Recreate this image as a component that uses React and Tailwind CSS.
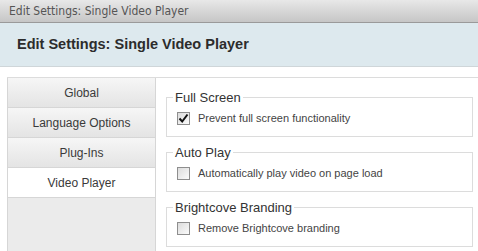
import React from 'react';

const tabs = ['Global', 'Language Options', 'Plug-Ins', 'Video Player'];

const groups = [
  { legend: 'Full Screen', label: 'Prevent full screen functionality', checked: true },
  { legend: 'Auto Play', label: 'Automatically play video on page load', checked: false },
  { legend: 'Brightcove Branding', label: 'Remove Brightcove branding', checked: false },
];

function Check({ checked }) {
  return (
    <span className="w-[13px] h-[13px] border border-[#8e8e8e] bg-gradient-to-br from-[#dcdcdc] to-[#fbfbfb] flex items-center justify-center shrink-0">
      {checked && (
        <svg width="11" height="11" viewBox="0 0 11 11">
          <path d="M1.5 5.5 L4.2 8.5 L9.5 1.5" fill="none" stroke="#111" strokeWidth="2" />
        </svg>
      )}
    </span>
  );
}

export default function App() {
  return (
    <div className="w-[478px] h-[251px] overflow-hidden bg-white" style={{ fontFamily: 'Arial, "Liberation Sans", sans-serif' }}>
      {/* window title */}
      <div className="h-[23px] bg-gradient-to-b from-[#e8e8e8] to-[#c6c6c6] border-b border-[#9a9a9a] flex items-center pl-[9px] text-[12px] text-[#555]" style={{ fontFamily: '"DejaVu Sans Condensed", Tahoma, sans-serif' }}>
        Edit Settings: Single Video Player
      </div>

      {/* header band */}
      <div className="h-[44px] bg-[#dde9ee] border-b border-[#cfd6d9] flex items-center pl-[17px] text-[14.5px] font-bold text-[#2c2c2c]">
        Edit Settings: Single Video Player
      </div>

      <div className="mt-[10px] ml-[7px] flex border-t border-[#dcdcdc] h-[200px]">
        {/* tabs */}
        <div className="w-[149px] border-l border-r border-[#d6d6d6] bg-[#ebebeb] flex flex-col">
          {tabs.map(t => (
            <div
              key={t}
              className={`h-[30px] border-b border-[#d6d6d6] flex items-center justify-center text-[12px] text-[#3a3a3a] ${
                t === 'Video Player' ? 'bg-white' : 'bg-gradient-to-b from-[#f6f6f6] to-[#e4e4e4]'
              }`}
            >
              {t}
            </div>
          ))}
        </div>

        {/* settings */}
        <div className="flex-1 pl-[10px] pr-[5px] pt-[12px] flex flex-col gap-[8px]">
          {groups.map(g => (
            <fieldset key={g.legend} className="border border-[#dcdcdc] pl-[6px] pb-[10px]">
              <legend className="px-[2px] text-[13px] leading-[15px] text-[#333]">{g.legend}</legend>
              <div className="flex items-center gap-[8px] pl-[4px] mt-[6px] h-[15px]">
                <Check checked={g.checked} />
                <span className="text-[11px] text-[#444]">{g.label}</span>
              </div>
            </fieldset>
          ))}
        </div>
      </div>
    </div>
  );
}
